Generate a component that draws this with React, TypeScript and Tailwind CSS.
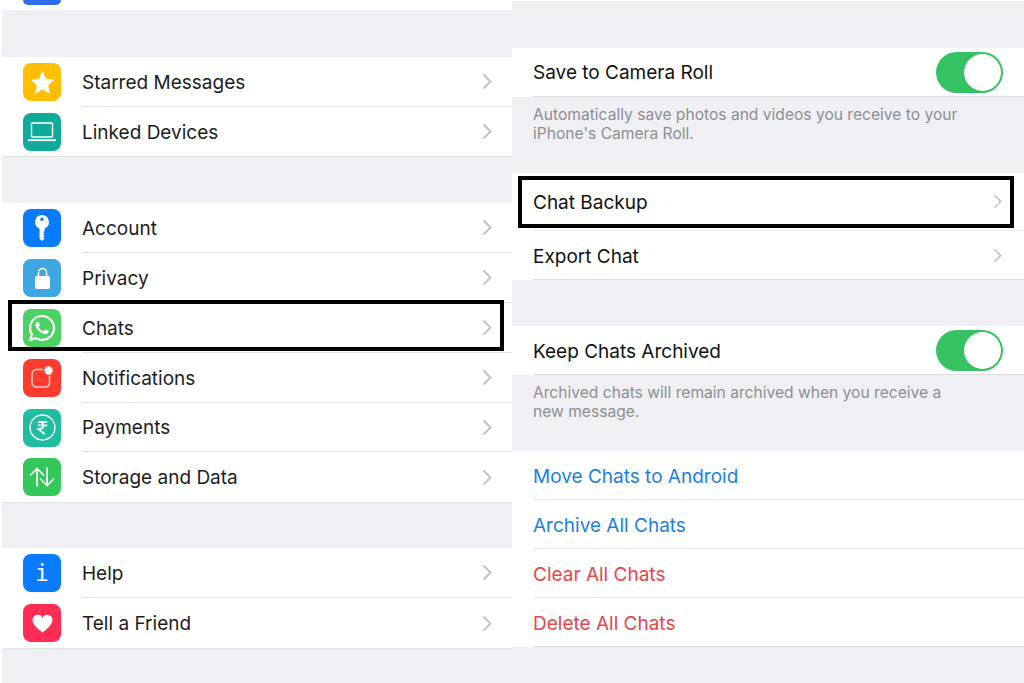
import type { ReactNode } from "react";
import { FaWhatsapp } from "react-icons/fa";

function Chevron({ className }: { className: string }) {
  return (
    <svg viewBox="0 0 10 16" className={className} fill="none" stroke="#c0c0c5" strokeWidth="1.8">
      <path d="M1.5 1 L8.5 8 L1.5 15" />
    </svg>
  );
}

function Tile({ color, children }: { color: string; children: ReactNode }) {
  return (
    <div className={`flex h-[38px] w-[38px] shrink-0 items-center justify-center rounded-[8px] ${color}`}>
      {children}
    </div>
  );
}

function SettingRow({
  tile,
  label,
  height,
  last,
  raised,
}: {
  tile: ReactNode;
  label: string;
  height: string;
  last?: boolean;
  raised?: boolean;
}) {
  return (
    <div className={`flex items-center bg-white pl-[21px] ${height}`}>
      {tile}
      <div
        className={`ml-[21px] flex h-full flex-1 items-center justify-between pr-[20px] ${last ? "" : "border-b border-[#e4e4e7]"}`}
      >
        <span className={`text-[19px] text-[#1c1c1e] ${raised ? "pt-[2px]" : "pt-[4px]"}`}>{label}</span>
        <Chevron className="h-[17px] w-[10px]" />
      </div>
    </div>
  );
}

function Gap({ height, top }: { height: string; top?: boolean }) {
  return <div className={`bg-[#f0f0f4] ${height} ${top ? "border-t border-[#e4e4e7]" : ""}`} />;
}

function Toggle() {
  return (
    <div className="flex h-[41px] w-[67px] items-center justify-end rounded-full bg-[#34c263] pr-[2px]">
      <div className="h-[37px] w-[37px] rounded-full bg-white" />
    </div>
  );
}

function Caption({ children, height }: { children: ReactNode; height: string }) {
  return (
    <div className={`bg-[#f0f0f4] pl-[21px] pr-[40px] pt-[9px] text-[15.6px] leading-[18.5px] text-[#8e8e93] ${height}`}>
      {children}
    </div>
  );
}

function TextRow({
  label,
  height,
  tone,
  last,
  chevron,
  right,
  raised,
}: {
  label: string;
  height: string;
  tone: string;
  last?: boolean;
  chevron?: boolean;
  right?: ReactNode;
  raised?: boolean;
}) {
  return (
    <div className={`bg-white pl-[21px] ${height}`}>
      <div
        className={`flex h-full items-center justify-between ${right ? "pr-[21px]" : "pr-[22px]"} ${last ? "border-b border-[#dedee2]" : "border-b border-[#e9e9ec]"}`}
      >
        <span className={`text-[19px] ${raised ? "pt-[2px]" : "pt-[4px]"} ${tone}`}>{label}</span>
        {chevron && <Chevron className="h-[15px] w-[9px]" />}
        {right}
      </div>
    </div>
  );
}

const icons = {
  star: (
    <svg viewBox="0 0 24 24" className="h-[27px] w-[27px]" fill="#fff">
      <path d="M12 1.8l3.1 6.9 7.4.8-5.5 5 1.6 7.4-6.6-3.8-6.6 3.8 1.6-7.4-5.5-5 7.4-.8z" />
    </svg>
  ),
  laptop: (
    <svg viewBox="0 0 28 20" className="h-[20px] w-[28px]" fill="none" stroke="#fff" strokeWidth="1.4">
      <rect x="3.5" y="1" width="21" height="14" rx="1" />
      <path d="M0 18.2h28" strokeWidth="1.8" />
    </svg>
  ),
  key: (
    <svg viewBox="0 0 14 26" className="h-[26px] w-[14px]" fill="#fff">
      <path d="M7 0a7 7 0 0 1 2.500 13.500V16l-1.300 1.300 1.300 1.300-1.300 1.300 1.300 1.300-1.300 1.300 1.300 1.300L7 26l-2.500-2.500V13.500A7 7 0 0 1 7 0zm0 2.500a1.800 1.800 0 1 0 0 3.600 1.800 1.800 0 0 0 0-3.600z" />
    </svg>
  ),
  lock: (
    <svg viewBox="0 0 15 22" className="h-[22px] w-[15px]">
      <path d="M3.500 10V5.500a4 4 0 0 1 8 0V10" fill="none" stroke="#fff" strokeWidth="1.5" />
      <rect x="0" y="9" width="15" height="13" rx="2" fill="#fff" />
    </svg>
  ),
  bell: (
    <svg viewBox="0 0 24 24" className="h-[24px] w-[24px]">
      <rect x="2" y="3.500" width="17.500" height="17.500" rx="4.500" fill="none" stroke="#ffd0cc" strokeWidth="1.600" />
      <circle cx="18.500" cy="4.500" r="5.500" fill="#ff3b30" />
      <circle cx="18.500" cy="4.500" r="4.200" fill="#fff" />
    </svg>
  ),
  rupee: (
    <svg viewBox="0 0 26 26" className="h-[27px] w-[27px]" fill="none" stroke="#fff" strokeWidth="1.300">
      <circle cx="13" cy="13" r="12" />
      <path d="M8.500 7.500h9M8.500 11h9M10 7.500c5 0 5.500 7-.8 7l6 5" strokeWidth="1.700" />
    </svg>
  ),
  arrows: (
    <svg viewBox="0 0 26 20" className="h-[20px] w-[26px]" fill="none" stroke="#fff" strokeWidth="1.700">
      <path d="M8 19.500V1.500M1 8.500l7-7 7 7M18 .5v18M11 11.500l7 7 7-7" />
    </svg>
  ),
  heart: (
    <svg viewBox="0 0 24 22" className="h-[19px] w-[21px]" fill="#fff">
      <path d="M12 21.500C5 16 .5 12 .5 7A6 6 0 0 1 12 4.500 6 6 0 0 1 23.500 7c0 5-4.500 9-11.500 14.500z" />
    </svg>
  ),
};

export default function App() {
  return (
    <div className="relative flex h-[683px] w-[1024px] overflow-hidden bg-white font-['Inter',sans-serif]">
      {/* settings list */}
      <div className="flex h-full w-[512px] flex-col pl-[2px]">
        <div className="h-[10px] bg-white pl-[21px]">
          <div className="h-[5px] w-[38px] rounded-b-[8px] bg-[#2f6fed]" />
        </div>
        <Gap height="h-[47px]" />
        <SettingRow height="h-[50px]" label="Starred Messages" tile={<Tile color="bg-[#fdbf00]">{icons.star}</Tile>} />
        <SettingRow height="h-[49px]" label="Linked Devices" last tile={<Tile color="bg-[#11a99a]">{icons.laptop}</Tile>} />
        <Gap height="h-[47px]" top />
        <SettingRow height="h-[50px]" label="Account" tile={<Tile color="bg-[#0a7aff]">{icons.key}</Tile>} />
        <SettingRow height="h-[50px]" label="Privacy" tile={<Tile color="bg-[#3ea6e0]">{icons.lock}</Tile>} />
        <SettingRow
          height="h-[50px]"
          label="Chats"
          tile={
            <Tile color="bg-[#4cd263]">
              <FaWhatsapp className="h-[30px] w-[30px] text-white" />
            </Tile>
          }
        />
        <SettingRow height="h-[50px]" label="Notifications" tile={<Tile color="bg-[#ff3b30]">{icons.bell}</Tile>} />
        <SettingRow height="h-[49px]" label="Payments" raised tile={<Tile color="bg-[#21bda0]">{icons.rupee}</Tile>} />
        <SettingRow height="h-[50px]" label="Storage and Data" last raised tile={<Tile color="bg-[#34c759]">{icons.arrows}</Tile>} />
        <Gap height="h-[46px]" top />
        <SettingRow
          height="h-[50px]"
          label="Help"
          tile={
            <Tile color="bg-[#0a7aff]">
              <span className="font-['DejaVu_Sans_Mono',monospace] text-[23px] leading-none text-white">i</span>
            </Tile>
          }
        />
        <SettingRow height="h-[50px]" label="Tell a Friend" last raised tile={<Tile color="bg-[#ff2d55]">{icons.heart}</Tile>} />
        <div className="flex-1 border-t border-[#e4e4e7] bg-[#f0f0f4]" />
      </div>

      {/* chat settings */}
      <div className="flex h-full w-[512px] flex-col">
        <div className="h-px bg-white" />
        <Gap height="h-[47px]" />
        <TextRow height="h-[49px]" label="Save to Camera Roll" tone="text-[#111]" last right={<Toggle />} raised />
        <Caption height="h-[76px]">
          Automatically save photos and videos you receive to your
          <br />
          iPhone's Camera Roll.
        </Caption>
        <TextRow height="h-[58px]" label="Chat Backup" tone="text-[#111]" chevron />
        <TextRow height="h-[49px]" label="Export Chat" tone="text-[#111]" last chevron />
        <Gap height="h-[46px]" />
        <TextRow height="h-[49px]" label="Keep Chats Archived" tone="text-[#111]" last right={<Toggle />} />
        <Caption height="h-[76px]">
          Archived chats will remain archived when you receive a
          <br />
          new message.
        </Caption>
        <TextRow height="h-[49px]" label="Move Chats to Android" tone="text-[#1c7fe0]" />
        <TextRow height="h-[49px]" label="Archive All Chats" tone="text-[#1c7fe0]" />
        <TextRow height="h-[49px]" label="Clear All Chats" tone="text-[#e8434a]" />
        <TextRow height="h-[49px]" label="Delete All Chats" tone="text-[#e8434a]" last />
        <div className="flex-1 bg-[#f0f0f4]" />
      </div>

      {/* highlight boxes */}
      <div className="absolute left-[8px] top-[300px] h-[51px] w-[496px] border-[4px] border-black" />
      <div className="absolute left-[518px] top-[176px] h-[52px] w-[496px] border-[4px] border-black" />
    </div>
  );
}
